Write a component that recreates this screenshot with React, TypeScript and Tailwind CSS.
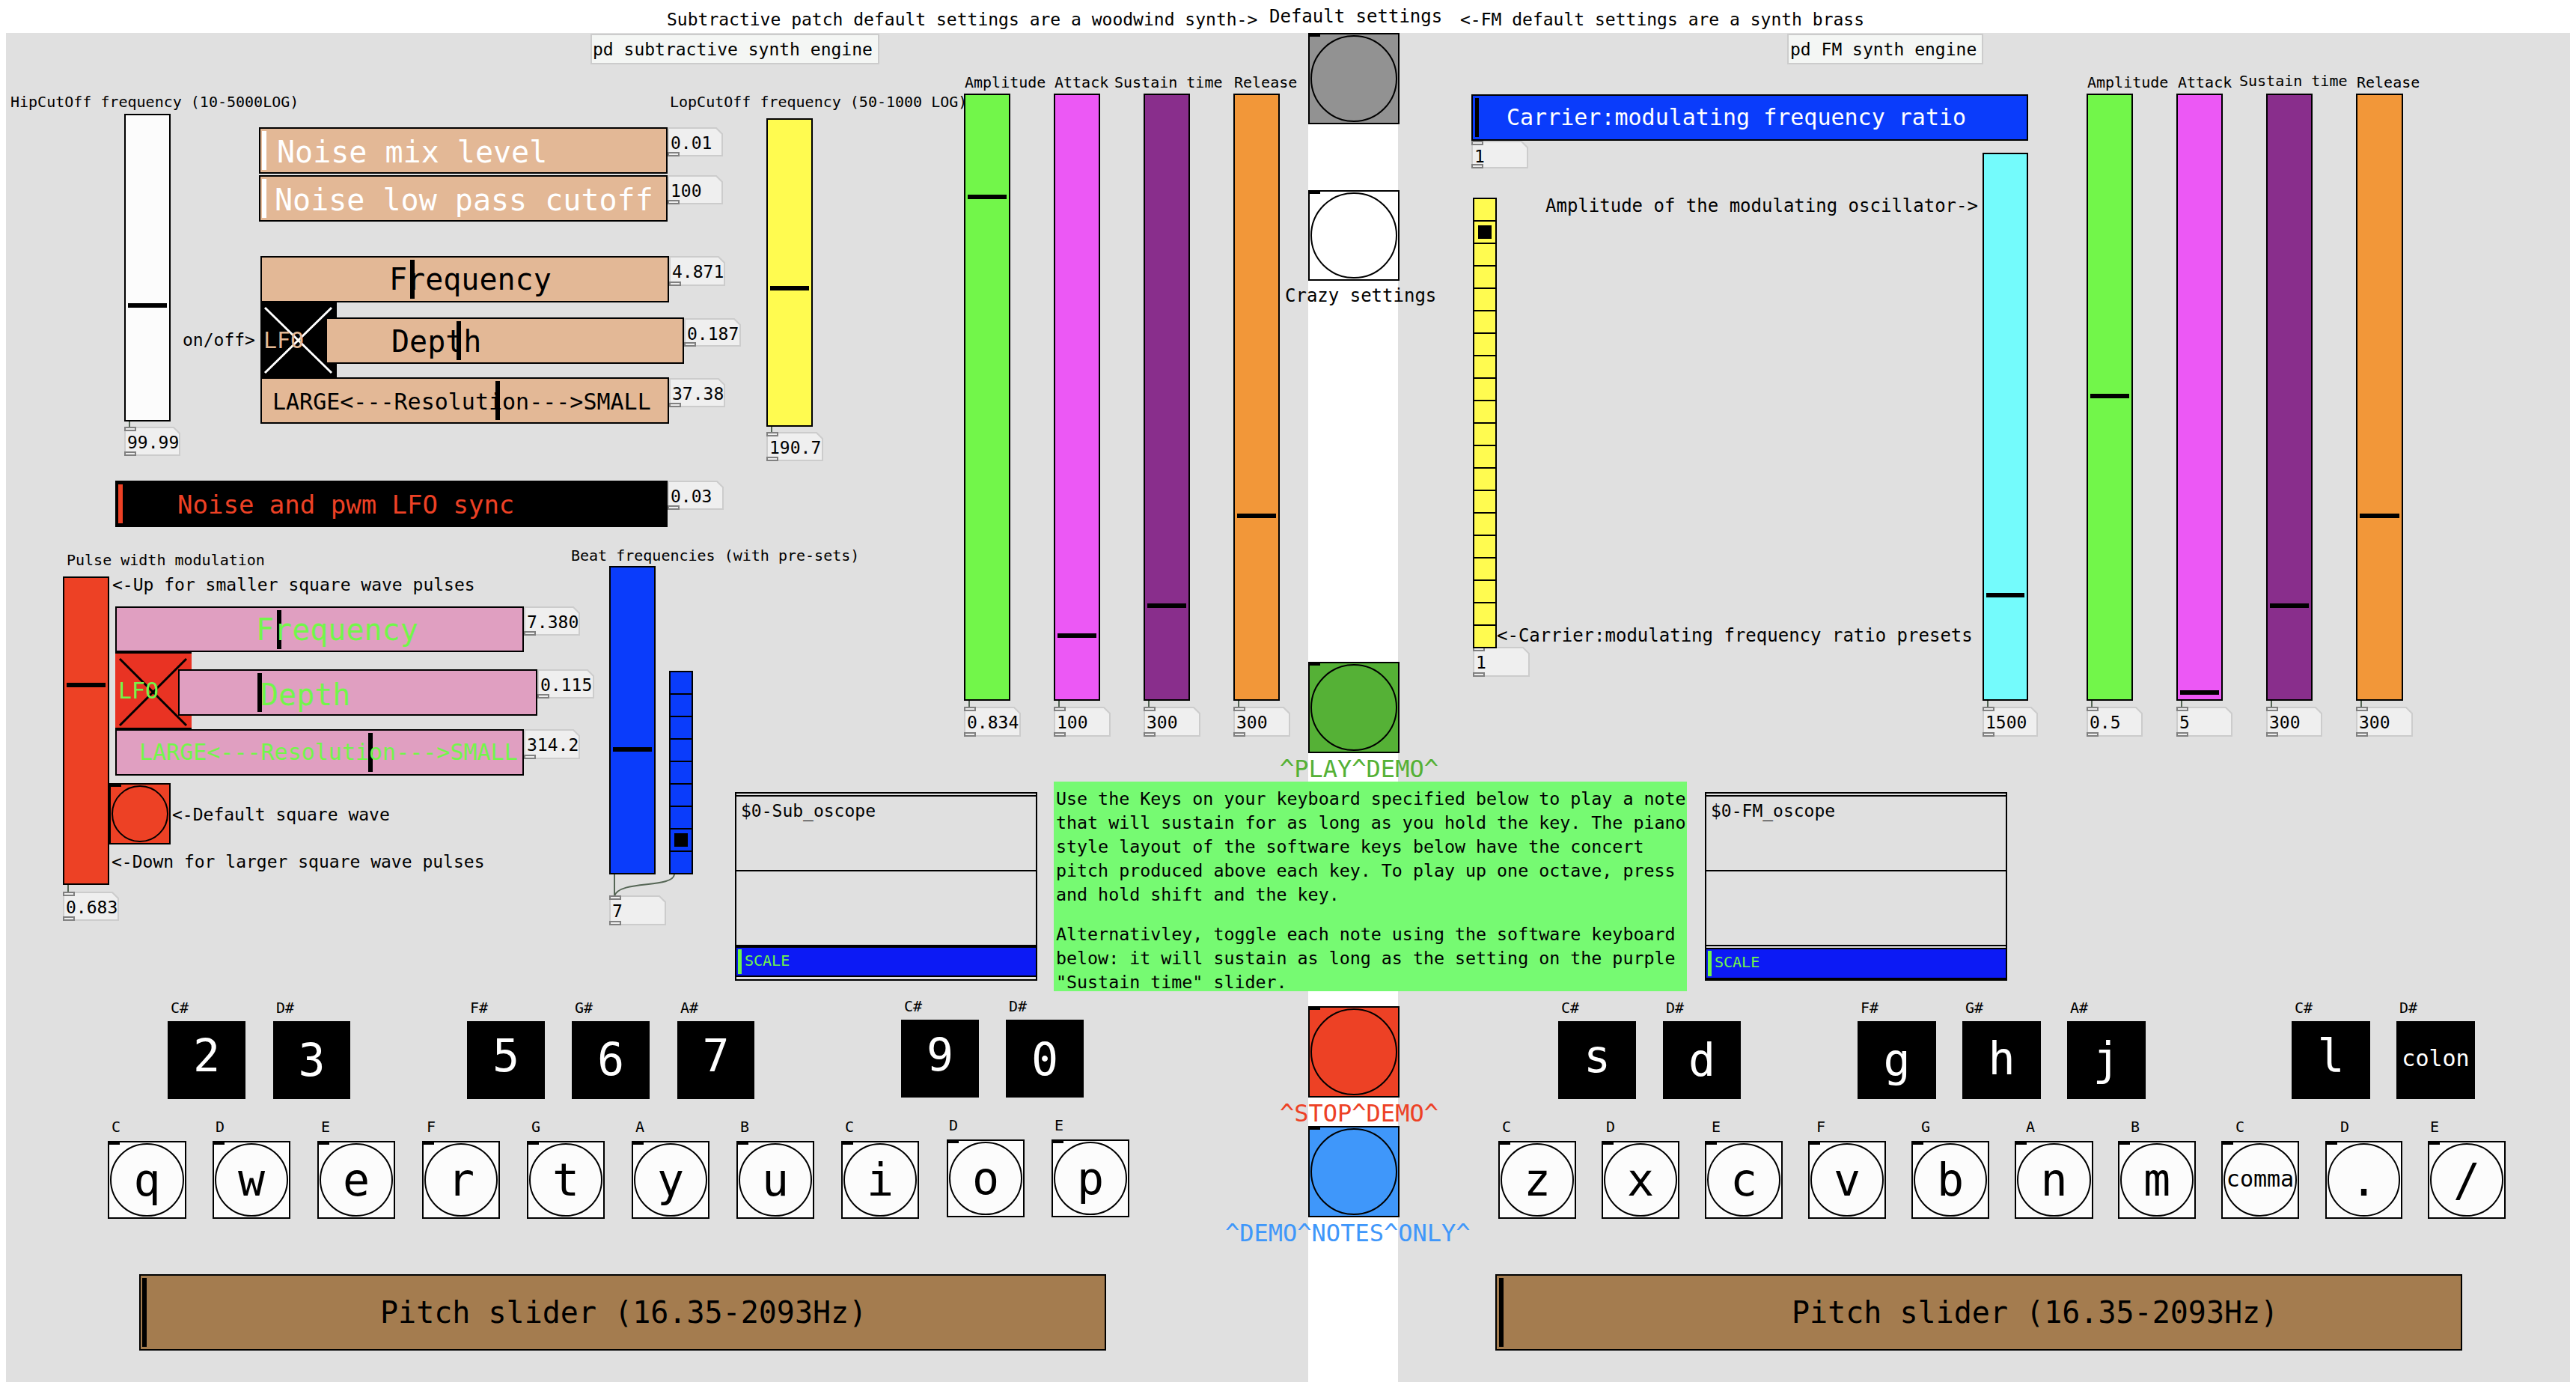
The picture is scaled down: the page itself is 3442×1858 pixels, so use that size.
import React from "react"

// Pure Data patch: every widget sits at its own place on the patch canvas
const sizes: Record<number, string> = {
    20: "text-[20px]",
    23: "text-[23px]",
    24: "text-[24px]",
    30: "text-[30px]",
    32: "text-[32px]",
    34: "text-[34px]",
    40: "text-[40px]",
    60: "text-[60px]",
}

interface LabelProps {
    x: number
    cy: number
    size?: number
    color?: string
    children: React.ReactNode
}

function Label({ x, cy, size = 23, color = "text-black", children }: LabelProps) {
    return (
        <span
            className={`absolute leading-none whitespace-pre ${sizes[size]} ${color}`}
            style={{ left: x, top: cy - size / 2 }}
        >
            {children}
        </span>
    )
}

interface SliderProps {
    x: number
    y: number
    r: number
    b: number
    color: string
    knob: [number, number, number, number]
    knobColor?: string
}

function Slider({ x, y, r, b, color, knob, knobColor = "bg-black" }: SliderProps) {
    return (
        <>
            <div
                className={`absolute border-2 border-black ${color}`}
                style={{ left: x, top: y, width: r - x, height: b - y }}
            />
            <div
                className={`absolute ${knobColor}`}
                style={{ left: knob[0], top: knob[1], width: knob[2] - knob[0], height: knob[3] - knob[1] }}
            />
        </>
    )
}

function VSlider({ x, y, r, b, color, ky }: { x: number; y: number; r: number; b: number; color: string; ky: number }) {
    return <Slider x={x} y={y} r={r} b={b} color={color} knob={[x + 5, ky, r - 5, ky + 6]} />
}

function NumBox({ x, y, r, b, value, top = false }: { x: number; y: number; r: number; b: number; value: string; top?: boolean }) {
    const w = r - x
    const h = b - y
    return (
        <div className="absolute" style={{ left: x, top: y, width: w, height: h }}>
            <svg className="absolute inset-0" width={w} height={h}>
                <polygon
                    points={`1,1 ${w - 9},1 ${w - 1},9 ${w - 1},${h - 1} 1,${h - 1}`}
                    fill="#efefef"
                    stroke="#cccccc"
                    strokeWidth="2"
                />
            </svg>
            <span className="absolute left-[4px] top-[10px] text-[23px] leading-none text-black whitespace-pre">{value}</span>
            {top && <div className="absolute left-0 top-0 w-[16px] h-[6px] border-2 border-[#808080] bg-[#eeeeee]" />}
            <div className="absolute left-0 bottom-0 w-[16px] h-[6px] border-2 border-[#808080] bg-[#eeeeee]" />
        </div>
    )
}

function Wire({ x, y, b }: { x: number; y: number; b: number }) {
    return <div className="absolute w-[2px] bg-[#556655]" style={{ left: x, top: y, height: b - y }} />
}

function Bang({ x, y, r, b, color = "bg-[#fcfcfc]", children }: { x: number; y: number; r: number; b: number; color?: string; children?: React.ReactNode }) {
    return (
        <div
            className={`absolute border-2 border-black ${color}`}
            style={{ left: x, top: y, width: r - x, height: b - y }}
        >
            <div className="absolute left-0 top-0 w-[14px] h-[3px] bg-black" />
            <div className="absolute inset-[1px] rounded-full border-2 border-black" />
            {children}
        </div>
    )
}

function Toggle({ x, y, r, b, color, line }: { x: number; y: number; r: number; b: number; color: string; line: string }) {
    const w = r - x
    const h = b - y
    return (
        <div className={`absolute ${color}`} style={{ left: x, top: y, width: w, height: h }}>
            <svg className="absolute inset-0" width={w} height={h}>
                <path d={`M6 7 L${w - 7} ${h - 7} M${w - 7} 7 L6 ${h - 7}`} stroke={line} strokeWidth="3" fill="none" />
            </svg>
        </div>
    )
}

function Radio({ x, y, r, n, cell, selected, color }: { x: number; y: number; r: number; n: number; cell: number; selected: number; color: string }) {
    const rows = Array.from({ length: n }, (_, i) => i)
    return (
        <div className={`absolute flex flex-col border-t-2 border-x-2 border-black ${color}`} style={{ left: x, top: y, width: r - x }}>
            {rows.map((i) => (
                <div key={i} className="border-b-2 border-black flex items-center justify-center" style={{ height: cell }}>
                    {i === selected && <div className="w-[18px] h-[18px] bg-black" />}
                </div>
            ))}
        </div>
    )
}

function Scope({ x, name, fm }: { x: number; name: string; fm?: boolean }) {
    return (
        <div className="absolute top-[1058px] h-[252px] w-[404px] border-x-2 border-black" style={{ left: x }}>
            <div className="absolute left-0 right-0 top-0 h-[2px] bg-black" />
            <div className="absolute left-0 right-0 top-[4px] h-[2px] bg-black" />
            <div className="absolute left-0 right-0 top-[104px] h-[2px] bg-black" />
            {fm && <div className="absolute left-0 right-0 top-[204px] h-[2px] bg-black" />}
            <div className={fm ? "absolute left-0 right-0 top-[208px] bottom-0 border-t-2 border-b-4 border-black bg-[#0c1af5]" : "absolute left-0 right-0 top-[204px] h-[43px] border-t-4 border-b-2 border-black bg-[#0c1af5]"}>
                <div className="absolute left-[2px] top-[2px] bottom-[2px] w-[5px] bg-[#72f64a]" />
                <span className="absolute left-[11px] top-[7px] text-[20px] leading-none text-[#72f64a]">SCALE</span>
            </div>
            {!fm && <div className="absolute left-0 right-0 bottom-0 h-[2px] bg-black" />}
            <span className="absolute left-[6px] top-[14px] text-[23px] leading-none text-black whitespace-pre">{name}</span>
        </div>
    )
}

const labels: [number, number, number, string][] = [
    [891, 26, 23, "Subtractive patch default settings are a woodwind synth->"],
    [1696, 22, 24, "Default settings"],
    [1951, 26, 23, "<-FM default settings are a synth brass"],
    [14, 136, 20, "HipCutOff frequency (10-5000LOG)"],
    [895, 136, 20, "LopCutOff frequency (50-1000 LOG)"],
    [1289, 110, 20, "Amplitude"],
    [1409, 110, 20, "Attack"],
    [1489, 110, 20, "Sustain time"],
    [1649, 110, 20, "Release"],
    [2789, 110, 20, "Amplitude"],
    [2910, 110, 20, "Attack"],
    [2992, 108, 20, "Sustain time"],
    [3149, 110, 20, "Release"],
    [1717, 395, 24, "Crazy settings"],
    [2065, 275, 24, "Amplitude of the modulating oscillator->"],
    [2000, 849, 24, "<-Carrier:modulating frequency ratio presets"],
    [244, 454, 23, "on/off>"],
    [89, 748, 20, "Pulse width modulation"],
    [763, 742, 20, "Beat frequencies (with pre-sets)"],
    [150, 781, 23, "<-Up for smaller square wave pulses"],
    [230, 1088, 23, "<-Default square wave"],
    [149, 1151, 23, "<-Down for larger square wave pulses"],
]

const numBoxes: [number, number, number, number, string, boolean][] = [
    [166, 570, 241, 609, "99.99", true],
    [892, 170, 966, 209, "0.01", false],
    [892, 234, 966, 273, "100", false],
    [894, 342, 969, 382, "4.871", false],
    [914, 425, 990, 463, "0.187", false],
    [894, 505, 969, 544, "37.38", false],
    [892, 642, 967, 681, "0.03", false],
    [700, 810, 775, 849, "7.380", false],
    [718, 894, 794, 933, "0.115", false],
    [700, 974, 775, 1014, "314.2", false],
    [84, 1191, 159, 1230, "0.683", true],
    [814, 1196, 890, 1236, "7", true],
    [1024, 577, 1100, 616, "190.7", true],
    [1288, 944, 1364, 984, "0.834", true],
    [1408, 944, 1484, 984, "100", true],
    [1528, 944, 1604, 984, "300", true],
    [1648, 944, 1724, 984, "300", true],
    [1966, 188, 2042, 225, "1", true],
    [1968, 864, 2044, 904, "1", true],
    [2649, 944, 2723, 984, "1500", true],
    [2788, 944, 2863, 984, "0.5", true],
    [2908, 944, 2983, 984, "5", true],
    [3028, 944, 3103, 984, "300", true],
    [3148, 944, 3224, 984, "300", true],
]

const vSliders: [number, number, number, number, string, number][] = [
    [166, 152, 228, 563, "bg-[#fcfcfc]", 405],
    [1024, 158, 1086, 570, "bg-[#fffb50]", 382],
    [84, 770, 146, 1182, "bg-[#ed4125]", 912],
    [814, 756, 876, 1168, "bg-[#0a3cfb]", 998],
    [1288, 125, 1350, 936, "bg-[#72f64a]", 260],
    [1408, 125, 1470, 936, "bg-[#ec58f5]", 846],
    [1528, 125, 1590, 936, "bg-[#892e8c]", 806],
    [1648, 125, 1710, 936, "bg-[#f29739]", 686],
    [2649, 204, 2710, 936, "bg-[#74fbfc]", 792],
    [2788, 125, 2850, 936, "bg-[#72f64a]", 526],
    [2908, 125, 2970, 936, "bg-[#ec58f5]", 922],
    [3028, 125, 3090, 936, "bg-[#892e8c]", 806],
    [3148, 125, 3211, 936, "bg-[#f29739]", 686],
]

const wires: [number, number, number][] = [
    [172, 563, 571], [1030, 570, 578], [90, 1182, 1192], [820, 1168, 1197],
    [1294, 936, 945], [1414, 936, 945], [1534, 936, 945], [1654, 936, 945],
    [2655, 936, 945], [2794, 936, 945], [2914, 936, 945], [3034, 936, 945], [3154, 936, 945],
]

const blackKeys: [number, number, number, string, string, number][] = [
    [224, 1364, 328, "C#", "2", 1431], [365, 1364, 468, "D#", "3", 1437],
    [624, 1364, 728, "F#", "5", 1431], [764, 1364, 868, "G#", "6", 1436], [905, 1364, 1008, "A#", "7", 1431],
    [1204, 1362, 1308, "C#", "9", 1430], [1344, 1362, 1448, "D#", "0", 1436],
    [2082, 1364, 2186, "C#", "s", 1432], [2222, 1364, 2326, "D#", "d", 1437],
    [2482, 1364, 2587, "F#", "g", 1437], [2622, 1364, 2727, "G#", "h", 1435], [2762, 1364, 2867, "A#", "j", 1435],
    [3062, 1364, 3167, "C#", "l", 1431],
]

const whiteKeys: [number, number, number, string, string, number][] = [
    [144, 1524, 249, "C", "q", 149], [284, 1524, 388, "D", "w", 288], [424, 1524, 528, "E", "e", 429], [564, 1524, 668, "F", "r", 570],
    [704, 1524, 808, "G", "t", 710], [844, 1524, 948, "A", "y", 849], [984, 1524, 1088, "B", "u", 989], [1124, 1524, 1228, "C", "i", 1129],
    [1265, 1522, 1369, "D", "o", 1268], [1405, 1522, 1509, "E", "p", 1409],
    [2002, 1524, 2106, "C", "z", 2007], [2140, 1524, 2244, "D", "x", 2146], [2278, 1524, 2382, "E", "c", 2287], [2416, 1524, 2520, "F", "v", 2427],
    [2554, 1524, 2658, "G", "b", 2567], [2692, 1524, 2797, "A", "n", 2707], [2830, 1524, 2934, "B", "m", 2847],
    [3107, 1524, 3210, "D", ".", 3127], [3244, 1524, 3348, "E", "/", 3247],
]

export default function App() {
    return (
        <div className="relative w-[3442px] h-[1858px] bg-white overflow-hidden font-['DejaVu_Sans_Mono',monospace]">
            {/* Patch background and the white strip behind the presets */}
            <div className="absolute left-[8px] top-[44px] w-[3426px] h-[1802px] bg-[#e0e0e0]" />
            <div className="absolute left-[1748px] top-[44px] w-[120px] h-[1802px] bg-white" />

            {/* Sub-patches */}
            <div className="absolute left-[789px] top-[45px] w-[386px] h-[41px] bg-[#f4f6f4] border-2 border-[#cccccc]" />
            <Label x={792} cy={66}>pd subtractive synth engine</Label>
            <div className="absolute left-[2388px] top-[45px] w-[262px] h-[41px] bg-[#f4f6f4] border-2 border-[#cccccc]" />
            <Label x={2392} cy={66}>pd FM synth engine</Label>

            {labels.map(([x, cy, size, text]) => (
                <Label key={`${x}-${cy}`} x={x} cy={cy} size={size}>{text}</Label>
            ))}

            {wires.map(([x, y, b]) => <Wire key={`${x}-${y}`} x={x} y={y} b={b} />)}
            {vSliders.map(([x, y, r, b, color, ky]) => (
                <VSlider key={`${x}-${y}`} x={x} y={y} r={r} b={b} color={color} ky={ky} />
            ))}

            {/* Noise */}
            <Slider x={346} y={170} r={892} b={232} color="bg-[#e3b896]" knob={[350, 175, 356, 227]} knobColor="bg-white" />
            <Label x={370} cy={203} size={40} color="text-white">Noise mix level</Label>
            <Slider x={346} y={234} r={892} b={296} color="bg-[#e3b896]" knob={[350, 239, 356, 291]} knobColor="bg-white" />
            <Label x={367} cy={267} size={40} color="text-white">Noise low pass cutoff</Label>

            <Slider x={348} y={342} r={894} b={404} color="bg-[#e3b896]" knob={[548, 347, 554, 399]} />
            <Label x={520} cy={373} size={40}>Frequency</Label>
            <Toggle x={348} y={404} r={450} b={505} color="bg-black" line="#ffffff" />
            <Label x={352} cy={455} size={30} color="text-[#e3b896]">LFO</Label>
            <Slider x={435} y={424} r={914} b={486} color="bg-[#e3b896]" knob={[610, 429, 616, 481]} />
            <Label x={523} cy={456} size={40}>Depth</Label>
            <Slider x={348} y={504} r={894} b={566} color="bg-[#e3b896]" knob={[662, 509, 668, 561]} />
            <Label x={364} cy={537} size={30}>LARGE&lt;---Resolution---&gt;SMALL</Label>

            <div className="absolute left-[154px] top-[642px] w-[738px] h-[62px] bg-black" />
            <div className="absolute left-[158px] top-[647px] w-[6px] h-[52px] bg-[#ed4125]" />
            <Label x={237} cy={674} size={34} color="text-[#ed4125]">Noise and pwm LFO sync</Label>

            {/* Pulse width modulation */}
            <Slider x={154} y={810} r={700} b={871} color="bg-[#e09fc1]" knob={[370, 815, 376, 867]} />
            <Label x={342} cy={841} size={40} color="text-[#72f64a]">Frequency</Label>
            <Toggle x={154} y={871} r={256} b={974} color="bg-[#e93323] border-y-2 border-black" line="#000000" />
            <Label x={158} cy={923} size={30} color="text-[#72f64a]">LFO</Label>
            <Slider x={238} y={894} r={718} b={956} color="bg-[#e09fc1]" knob={[344, 899, 350, 951]} />
            <Label x={348} cy={928} size={40} color="text-[#72f64a]">Depth</Label>
            <Slider x={154} y={974} r={700} b={1036} color="bg-[#e09fc1]" knob={[492, 979, 498, 1031]} />
            <Label x={186} cy={1005} size={30} color="text-[#72f64a]">LARGE&lt;---Resolution---&gt;SMALL</Label>
            <Bang x={146} y={1046} r={228} b={1128} color="bg-[#ed4125]" />

            {/* Beat frequency presets */}
            <Radio x={894} y={896} r={926} n={9} cell={30} selected={7} color="bg-[#0a3cfb]" />
            <svg className="absolute left-[815px] top-[1165px]" width="90" height="35">
                <path d="M6 32 C12 10 84 22 86 3" stroke="#556655" strokeWidth="2" fill="none" />
            </svg>

            {numBoxes.map(([x, y, r, b, value, top]) => (
                <NumBox key={`${x}-${y}`} x={x} y={y} r={r} b={b} value={value} top={top} />
            ))}

            {/* Preset bangs */}
            <Bang x={1748} y={44} r={1870} b={166} color="bg-[#929292]" />
            <Bang x={1748} y={254} r={1870} b={375} color="bg-white" />
            <Bang x={1748} y={884} r={1870} b={1006} color="bg-[#55b136]" />
            <Label x={1710} cy={1027} size={32} color="text-[#55b136]">^PLAY^DEMO^</Label>
            <Bang x={1748} y={1344} r={1870} b={1466} color="bg-[#ed4125]" />
            <Label x={1710} cy={1487} size={32} color="text-[#ed4125]">^STOP^DEMO^</Label>
            <Bang x={1748} y={1504} r={1870} b={1626} color="bg-[#3f97fa]" />
            <Label x={1637} cy={1647} size={32} color="text-[#3f97fa]">^DEMO^NOTES^ONLY^</Label>

            {/* FM ratio */}
            <Slider x={1966} y={126} r={2710} b={188} color="bg-[#0a3cfb]" knob={[1971, 131, 1976, 183]} />
            <Label x={2013} cy={157} size={30} color="text-white">Carrier:modulating frequency ratio</Label>
            <Radio x={1968} y={264} r={2000} n={20} cell={30} selected={1} color="bg-[#fffb50]" />

            {/* Instructions */}
            <div className="absolute left-[1408px] top-[1044px] w-[846px] h-[280px] bg-[#76fa72] pl-[3px] pt-[7px] text-[23.3px] leading-[32px] text-black whitespace-pre">
                <p>{"Use the Keys on your keyboard specified below to play a note\nthat will sustain for as long as you hold the key. The piano\nstyle layout of the software keys below have the concert\npitch produced above each key. To play up one octave, press\nand hold shift and the key."}</p>
                <p className="mt-[21px]">{"Alternativley, toggle each note using the software keyboard\nbelow: it will sustain as long as the setting on the purple\n\"Sustain time\" slider."}</p>
            </div>

            <Scope x={982} name="$0-Sub_oscope" />
            <Scope x={2278} name="$0-FM_oscope" fm />

            {/* Black keys */}
            {blackKeys.map(([x, y, r, note, key, base]) => (
                <React.Fragment key={`${x}-${key}`}>
                    <div className="absolute bg-black h-[104px] text-center text-white text-[60px] leading-none" style={{ left: x, top: y, width: r - x }}>
                        <span className="relative" style={{ top: base - y - 51 }}>{key}</span>
                    </div>
                    <Label x={x + 4} cy={y - 18} size={20}>{note}</Label>
                </React.Fragment>
            ))}
            <div className="absolute left-[3202px] top-[1364px] w-[105px] h-[104px] bg-black flex items-center justify-center pb-[4px] text-white text-[30px] leading-none">colon</div>
            <Label x={3206} cy={1346} size={20}>D#</Label>

            {/* White keys */}
            {whiteKeys.map(([x, y, r, note, key, noteX]) => (
                <React.Fragment key={`${x}-${key}`}>
                    <Bang x={x} y={y} r={r} b={y + 104}>
                        <span className="absolute inset-x-0 text-center text-[60px] leading-none text-black" style={{ top: 20 }}>{key}</span>
                    </Bang>
                    <Label x={noteX} cy={y - 19} size={20}>{note}</Label>
                </React.Fragment>
            ))}
            <Bang x={2968} y={1524} r={3072} b={1628}>
                <span className="absolute inset-x-0 top-[34px] text-center text-[30px] leading-none text-black">comma</span>
            </Bang>
            <Label x={2987} cy={1505} size={20}>C</Label>

            {/* Pitch sliders */}
            <Slider x={186} y={1702} r={1478} b={1804} color="bg-[#a47c4f]" knob={[190, 1707, 196, 1799]} />
            <Label x={508} cy={1753} size={40}>Pitch slider (16.35-2093Hz)</Label>
            <Slider x={1998} y={1702} r={3290} b={1804} color="bg-[#a47c4f]" knob={[2003, 1707, 2009, 1799]} />
            <Label x={2394} cy={1753} size={40}>Pitch slider (16.35-2093Hz)</Label>
        </div>
    )
}
